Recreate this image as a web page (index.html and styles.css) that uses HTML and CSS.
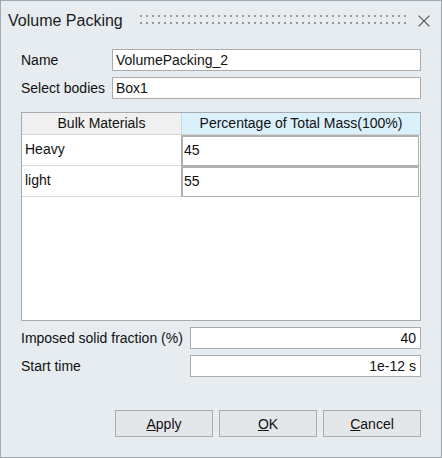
FILE: index.html
```html
<!DOCTYPE html>
<html>
<head>
<meta charset="utf-8">
<link rel="stylesheet" href="styles.css">
</head>
<body>
<div class="dialog">
  <div class="titlebar">
    <span class="title">Volume Packing</span>
    <span class="grip"></span>
    <svg class="close" width="12" height="12" viewBox="0 0 12 12"><path d="M0.6 0.6 L11.4 11.4 M11.4 0.6 L0.6 11.4" stroke="#5a5a5a" stroke-width="1.3" fill="none"/></svg>
  </div>
  <div class="content">
    <div class="form top">
      <label class="lbl">Name</label>
      <div class="field">VolumePacking_2</div>
      <label class="lbl">Select bodies</label>
      <div class="field">Box1</div>
    </div>
    <div class="table">
      <div class="row head">
        <div class="c1 h1">Bulk Materials</div>
        <div class="c2 h2">Percentage of Total Mass(100%)</div>
      </div>
      <div class="row">
        <div class="c1">Heavy</div>
        <div class="c2 edit">45</div>
      </div>
      <div class="row">
        <div class="c1">light</div>
        <div class="c2 edit">55</div>
      </div>
    </div>
    <div class="form bottom">
      <label class="lbl">Imposed solid fraction (%)</label>
      <div class="field right">40</div>
      <label class="lbl">Start time</label>
      <div class="field right">1e-12 s</div>
    </div>
    <div class="buttons">
      <button class="btn"><u>A</u>pply</button>
      <button class="btn"><u>O</u>K</button>
      <button class="btn"><u>C</u>ancel</button>
    </div>
  </div>
</div>
</body>
</html>
```
FILE: styles.css
```css
html, body {
  margin: 0;
  padding: 0;
  background: #e6ecf0;
}
.dialog {
  width: 442px;
  height: 458px;
  box-sizing: border-box;
  border: 1px solid #a3a8ad;
  background: #e6ecf0;
  font-family: "Liberation Sans", Arial, sans-serif;
  font-size: 14px;
  color: #111;
}
.titlebar {
  height: 40px;
  display: flex;
  align-items: center;
}
.title {
  width: 132px;
  padding-left: 7px;
  box-sizing: content-box;
  font-size: 16px;
  color: #1c1c1c;
  white-space: nowrap;
}
.grip {
  width: 266px;
  height: 9px;
  margin-top: -4px;
  background-image:
    linear-gradient(90deg, #979797 2px, transparent 2px),
    linear-gradient(90deg, #979797 2px, transparent 2px);
  background-size: 6px 2px, 6px 2px;
  background-position: 0 0, 0 7px;
  background-repeat: repeat-x;
}
.close {
  margin-left: 12px;
  margin-top: -1px;
}
.content {
  padding: 8px 20px 0 20px;
}
.form {
  display: grid;
  row-gap: 6px;
  align-items: center;
}
.form.top {
  grid-template-columns: 91px 309px;
}
.form.bottom {
  grid-template-columns: 169px 231px;
  margin-top: 6px;
}
.lbl {
  white-space: nowrap;
}
.field {
  height: 22px;
  box-sizing: border-box;
  border: 1px solid #a9abad;
  background: #fff;
  padding: 0 3px;
  line-height: 20px;
  white-space: nowrap;
}
.field.right {
  text-align: right;
  padding-right: 4px;
}
.table {
  margin-top: 13px;
  width: 400px;
  height: 209px;
  box-sizing: border-box;
  border: 1px solid #a8abae;
  background: #fff;
}
.row {
  display: flex;
  height: 31px;
  box-sizing: border-box;
  border-bottom: 1px solid #d9d9d9;
}
.row.head {
  height: 22px;
  border-bottom: 1px solid #d4d4d4;
}
.c1 {
  width: 159px;
  padding-left: 3px;
  box-sizing: border-box;
  line-height: 29px;
  white-space: nowrap;
}
.c2 {
  width: 239px;
  box-sizing: border-box;
  white-space: nowrap;
}
.h1 {
  background: #f0f0f0;
  text-align: center;
  line-height: 21px;
  padding-left: 0;
}
.h2 {
  background: #daf0fb;
  border-left: 1px solid #c8d8e2;
  text-align: center;
  line-height: 21px;
}
.edit {
  border: 2px solid #b0b0b0;
  border-right-width: 1px;
  border-bottom-width: 1px;
  margin-bottom: -1px;
  padding-left: 1px;
  line-height: 27px;
  height: 31px;
  width: 238px;
}
.buttons {
  display: flex;
  justify-content: flex-end;
  gap: 6px;
  margin-top: 33px;
}
.btn {
  width: 98px;
  height: 27px;
  box-sizing: border-box;
  border: 1px solid #a9abad;
  background: #e4e7ea;
  font-family: "Liberation Sans", Arial, sans-serif;
  font-size: 14px;
  color: #111;
  padding: 0;
  border-radius: 0;
}
```
